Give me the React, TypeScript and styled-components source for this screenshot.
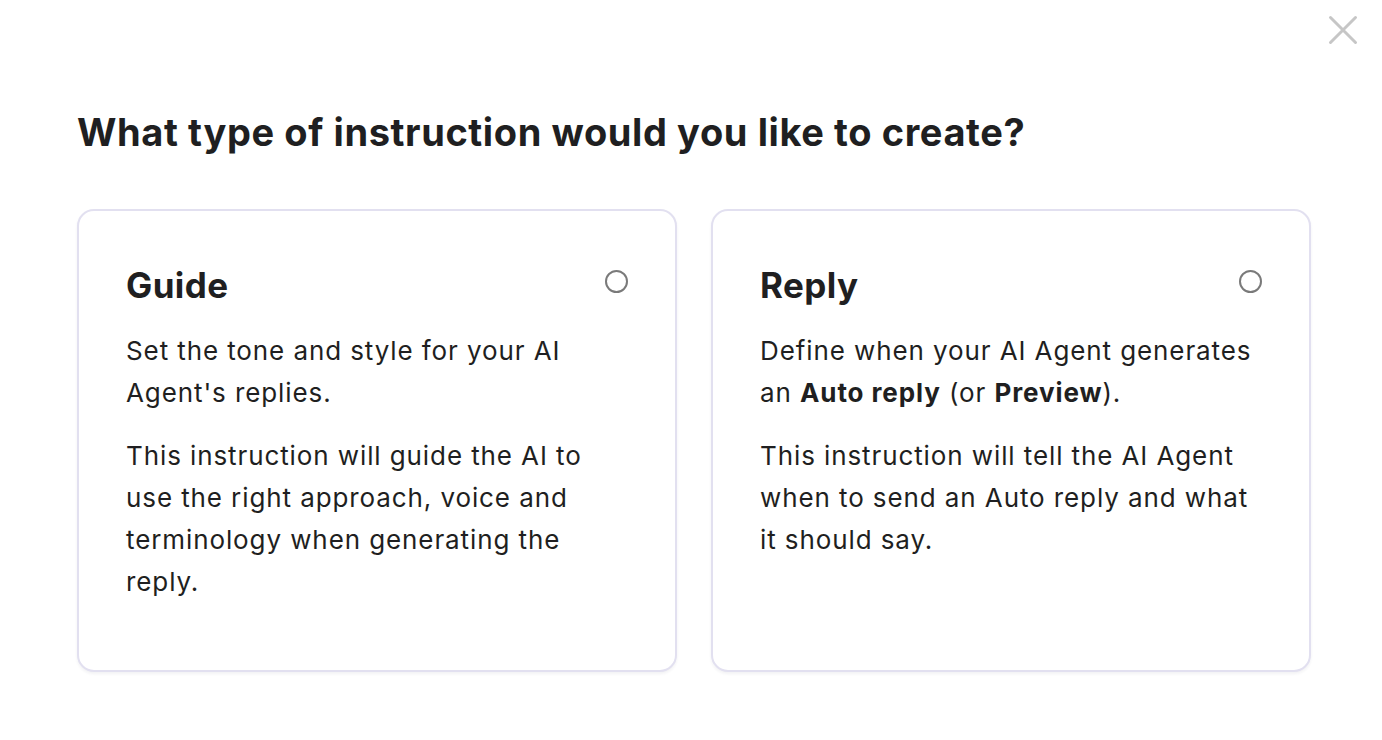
import React from "react";
import styled, { createGlobalStyle } from "styled-components";

const Global = createGlobalStyle`
  html, body { margin: 0; padding: 0; background: #fff; }
  body {
    font-family: Inter, "Noto Sans", sans-serif;
    color: #1f1f21;
    font-optical-sizing: none;
    font-variation-settings: "opsz" 14;
  }
`;

const Page = styled.div`
  position: relative;
  width: 1382px;
  height: 740px;
  box-sizing: border-box;
  padding: 104px 71px 0 77px;
`;

const CloseButton = styled.button`
  position: absolute;
  top: 15px;
  right: 24px;
  width: 30px;
  height: 30px;
  padding: 0;
  border: none;
  background: none;
  display: flex;
  align-items: center;
  justify-content: center;
  cursor: pointer;
`;

const Heading = styled.h1`
  margin: 0 0 49px;
  font-size: 38px;
  line-height: 56px;
  font-weight: 700;
  letter-spacing: 0.6px;
  color: #1f1f21;
`;

const Cards = styled.div`
  display: grid;
  grid-template-columns: 600px 600px;
  gap: 34px;
`;

const Card = styled.div`
  box-sizing: border-box;
  height: 463px;
  border: 2px solid #e2e0f0;
  border-radius: 17px;
  box-shadow: 0 2px 3px rgba(30, 30, 60, 0.06);
  padding: 53px 47px 47px 47px;
  background: #fff;
`;

const CardHeader = styled.div`
  display: flex;
  justify-content: space-between;
  align-items: flex-start;
  margin-bottom: 24px;
`;

const CardTitle = styled.h2`
  margin: 0;
  font-size: 35px;
  line-height: 42px;
  font-weight: 700;
  letter-spacing: 0.4px;
  color: #1f1f21;
`;

const Radio = styled.span`
  box-sizing: border-box;
  width: 23px;
  height: 23px;
  border-radius: 50%;
  border: 2.5px solid #7a7a7a;
  margin-top: 6px;
  margin-right: 0;
`;

const Text = styled.p`
  margin: 0 0 21px;
  font-size: 26px;
  line-height: 42px;
  font-weight: 400;
  letter-spacing: 0.9px;
  color: #1f1f21;
`;

const Strong = styled.strong`
  font-weight: 700;
`;

export default function App() {
  return (
    <>
      <Global />
      <Page>
        <CloseButton aria-label="Close">
          <svg width="30" height="30" viewBox="0 0 30 30">
            <path d="M2.5 2.5 L27.5 27.5 M27.5 2.5 L2.5 27.5" stroke="#c6c6c6" strokeWidth="3" strokeLinecap="round" />
          </svg>
        </CloseButton>
        <Heading>What type of instruction would you like to create?</Heading>
        <Cards>
          <Card>
            <CardHeader>
              <CardTitle>Guide</CardTitle>
              <Radio />
            </CardHeader>
            <Text>Set the tone and style for your AI Agent's replies.</Text>
            <Text>
              This instruction will guide the AI to use the right approach, voice and terminology when
              generating the reply.
            </Text>
          </Card>
          <Card>
            <CardHeader>
              <CardTitle>Reply</CardTitle>
              <Radio />
            </CardHeader>
            <Text>
              Define when your AI Agent generates an <Strong>Auto reply</Strong> (or <Strong>Preview</Strong>).
            </Text>
            <Text>This instruction will tell the AI Agent when to send an Auto reply and what it should say.</Text>
          </Card>
        </Cards>
      </Page>
    </>
  );
}
